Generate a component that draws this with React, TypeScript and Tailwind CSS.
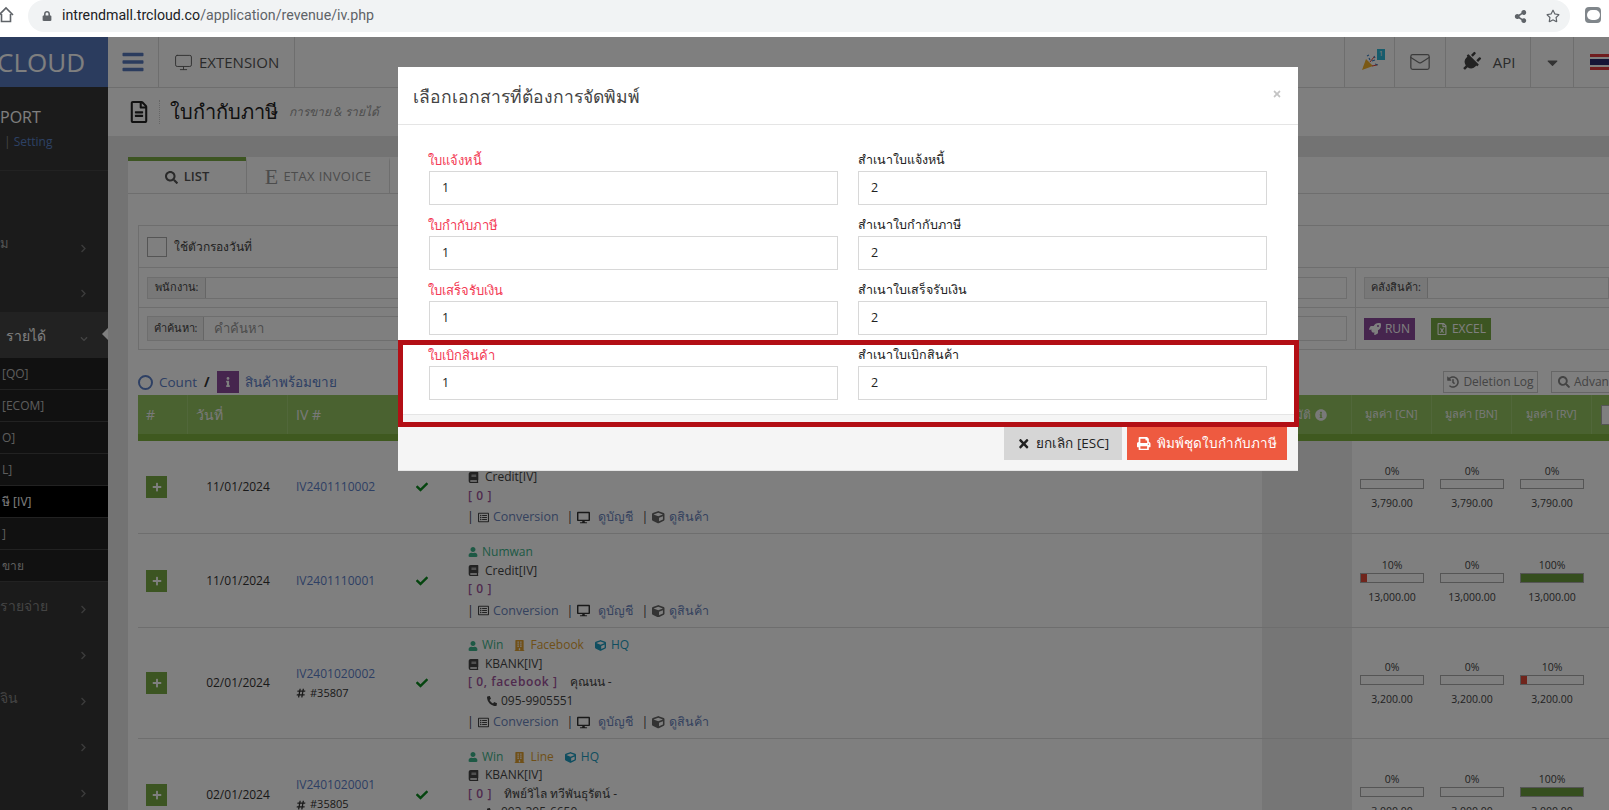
import React from 'react';
import { Mail, Monitor } from 'lucide-react';
import {
  FaBars, FaBook, FaBuilding, FaCaretDown, FaCheck, FaChevronDown, FaChevronRight, FaCube, FaDesktop, FaHashtag,
  FaHistory, FaInfo, FaInfoCircle, FaPhone, FaPlug, FaPlus, FaPrint, FaRegFileAlt, FaRegFileExcel,
  FaRegListAlt, FaRegStar, FaRocket, FaSearch, FaShareAlt, FaTimes, FaUser, FaLock,
} from 'react-icons/fa';

const copies = [
  ['ใบแจ้งหนี้', 'สำเนาใบแจ้งหนี้'],
  ['ใบกำกับภาษี', 'สำเนาใบกำกับภาษี'],
  ['ใบเสร็จรับเงิน', 'สำเนาใบเสร็จรับเงิน'],
  ['ใบเบิกสินค้า', 'สำเนาใบเบิกสินค้า'],
];

const menuTop = [
  { label: 'ม', h: 'h-[46px]' },
  { label: '', h: 'h-[45px]' },
];
const subMenu = ['[QO]', '[ECOM]', 'O]', 'L]', 'ษี [IV]', ']', 'ขาย'];
const menuBottom = ['รายจ่าย', '', 'จิน', '', ''];

type Bar = { pct: number; value: string };
type Row = {
  h: string;
  date: string;
  iv: string;
  ref?: string;
  user: string;
  channel?: string;
  branch?: string;
  pay: string;
  tag: string;
  customer?: string;
  phone?: string;
  bars: Bar[];
};

const rows: Row[] = [
  { h: 'h-[93px]', date: '11/01/2024', iv: 'IV2401110002', user: 'Numwan', pay: 'Credit[IV]', tag: '[ 0 ]', bars: [{ pct: 0, value: '3,790.00' }, { pct: 0, value: '3,790.00' }, { pct: 0, value: '3,790.00' }] },
  { h: 'h-[94px]', date: '11/01/2024', iv: 'IV2401110001', user: 'Numwan', pay: 'Credit[IV]', tag: '[ 0 ]', bars: [{ pct: 10, value: '13,000.00' }, { pct: 0, value: '13,000.00' }, { pct: 100, value: '13,000.00' }] },
  { h: 'h-[111px]', date: '02/01/2024', iv: 'IV2401020002', ref: '#35807', user: 'Win', channel: 'Facebook', branch: 'HQ', pay: 'KBANK[IV]', tag: '[ 0, facebook ]', customer: 'คุณนน -', phone: '095-9905551', bars: [{ pct: 0, value: '3,200.00' }, { pct: 0, value: '3,200.00' }, { pct: 10, value: '3,200.00' }] },
  { h: 'h-[112px]', date: '02/01/2024', iv: 'IV2401020001', ref: '#35805', user: 'Win', channel: 'Line', branch: 'HQ', pay: 'KBANK[IV]', tag: '[ 0 ]', customer: 'ทิพย์วิไล ทวีพันธุรัตน์ -', phone: '093-395-6650', bars: [{ pct: 0, value: '3,000.00' }, { pct: 0, value: '3,000.00' }, { pct: 100, value: '3,000.00' }] },
];

const tableCols = 'grid grid-cols-[50px_100px_100px_68px_806px_90px_80px_80px_80px_1fr]';

const ProgressCell: React.FC<{ bar: Bar }> = ({ bar }) => (
  <div className="flex flex-col items-center justify-center text-[10.5px] text-[#444]">
    <div className="h-[14px] leading-[14px]">{bar.pct}%</div>
    <div className="mt-[1px] h-[10px] w-[64px] border border-[#aaa] bg-white">
      {bar.pct === 100 && <div className="h-full w-full bg-[#6a9c3c]" />}
      {bar.pct === 10 && <div className="h-full w-[6px] bg-[#e04a38]" />}
    </div>
    <div className="mt-[7px] h-[14px] leading-[14px]">{bar.value}</div>
  </div>
);

const TableRow: React.FC<{ row: Row }> = ({ row }) => (
  <div className={`${tableCols} ${row.h} shrink-0 border-b border-[#ddd] bg-white`}>
    <div className="flex items-center pl-2">
      <div className="flex h-[22px] w-[21px] items-center justify-center bg-[#79aa45] text-[10px] text-white"><FaPlus /></div>
    </div>
    <div className="flex items-center justify-center text-[12px] font-medium text-[#333]">{row.date}</div>
    <div className="flex flex-col justify-center pl-2 text-[12px] text-[#5c80c8]">
      <div>{row.iv}</div>
      {row.ref && (
        <div className="mt-[2px] flex items-center gap-1 text-[11px] text-[#333]"><FaHashtag className="text-[10px]" />{row.ref}</div>
      )}
    </div>
    <div className="flex items-center justify-center text-[12px] text-[#0a8a1e]"><FaCheck /></div>
    <div className="flex flex-col justify-center pl-3 pt-[2px] text-[12px] leading-[18.5px] text-[#444]">
      <div className="flex items-center gap-[6px]">
        <span className="flex items-center gap-1 text-[#3cb38a]"><FaUser className="text-[10px]" />{row.user}</span>
        {row.channel && <span className="ml-[5px] flex items-center gap-[5px] text-[#e0a030]"><FaBuilding className="text-[11px]" />{row.channel}</span>}
        {row.branch && <span className="ml-[5px] flex items-center gap-[5px] text-[#1e9cc0]"><FaCube className="text-[11px]" />{row.branch}</span>}
      </div>
      <div className="flex items-center gap-[6px]"><FaBook className="text-[11px]" />{row.pay}</div>
      <div className="flex items-center gap-3">
        <span className="font-semibold tracking-[0.6px] text-[#a0559c]">{row.tag}</span>
        {row.customer && <span>{row.customer}</span>}
      </div>
      {row.phone && <div className="flex items-center gap-1 pl-[19px]"><FaPhone className="-scale-x-100 text-[10px]" />{row.phone}</div>}
      <div className="mt-[3px] flex items-center gap-[4px] text-[12.5px] text-[#6a84bc]">
        <span className="-ml-px text-[#444]">|</span><FaRegListAlt className="text-[11px] text-[#444]" />Conversion
        <span className="ml-[4px] text-[#444]">|</span><FaDesktop className="text-[13px] text-[#333]" /><span className="ml-[4px]">ดูบัญชี</span>
        <span className="ml-[4px] text-[#444]">|</span><FaCube className="text-[#666]" />ดูสินค้า
      </div>
    </div>
    <div className="bg-[#ececec]" />
    {row.bars.map((bar, i) => <ProgressCell key={i} bar={bar} />)}
    <div />
  </div>
);

const Sidebar: React.FC = () => (
  <aside className="flex w-[108px] shrink-0 flex-col overflow-hidden bg-[#363636] text-[#aaa]">
    <div className="flex h-[50px] shrink-0 items-center justify-end bg-[#5779bd] pr-[23px] text-[26px] text-white">CLOUD</div>
    <div className="h-[84px] shrink-0 border-b border-[#444]">
      <div className="mt-[18px] text-[16px] leading-[24px] text-white">PORT</div>
      <div className="mt-[4px] pl-[4px] text-[12px] text-[#5b83c8]"><span className="text-[#888]">|</span> Setting</div>
    </div>
    <div className="h-[50px] shrink-0" />
    {menuTop.map((m, i) => (
      <div key={i} className={`flex ${m.h} shrink-0 items-center justify-between pr-5 text-[13px]`}>
        <span>{m.label}</span><FaChevronRight className="mt-2 text-[9px] text-[#777]" />
      </div>
    ))}
    <div className="relative flex h-[46px] shrink-0 items-center justify-between bg-[#444] pl-[6px] pr-5 text-[14px] text-white">
      <span>รายได้</span><FaChevronDown className="mt-2 text-[8px] text-[#888]" />
      <div className="absolute right-0 top-[16px] h-0 w-0 border-y-[6px] border-r-[6px] border-y-transparent border-r-white" />
    </div>
    {subMenu.map((s, i) => (
      <div key={i} className={`flex h-[32px] shrink-0 items-center border-b border-[#444] pl-[2px] text-[12px] ${i === 4 ? 'bg-black text-white' : 'bg-[#222] text-[#bbb]'}`}>{s}</div>
    ))}
    {menuBottom.map((s, i) => (
      <div key={i} className="flex h-[46px] shrink-0 items-center justify-between pr-5 text-[14px] text-[#888]">
        <span>{s}</span><FaChevronRight className="mt-2 text-[9px] text-[#777]" />
      </div>
    ))}
  </aside>
);

const TopBar: React.FC = () => (
  <div className="flex h-[51px] shrink-0 items-stretch justify-between border-b border-[#ddd] bg-white text-[#555]">
    <div className="flex">
      <div className="flex w-[51px] items-center justify-center border-r border-[#ddd] text-[24px] text-[#5779bd]"><FaBars /></div>
      <div className="flex items-center gap-[6px] border-r border-[#ddd] px-[15px] text-[15px]"><Monitor size={19} strokeWidth={1.25} className="text-[#666]" />EXTENSION</div>
    </div>
    <div className="flex">
      <div className="relative flex w-[50px] items-center justify-center border-l border-[#ddd]">
        <svg width="18" height="18" viewBox="0 0 18 18">
          <path d="M1 17 L5 6 L12 13 Z" fill="#f5b32a" />
          <path d="M8 5 l1 2 M13 3 l1 2 M11 8 l3 -1 M14 11 l3 1 M6 3 l2 -1" stroke="#3b82c4" strokeWidth="1.2" />
          <path d="M9 9 l4 -5 M11 13 l5 -1" stroke="#e0453a" strokeWidth="1" />
        </svg>
        <div className="absolute right-[9px] top-[12px] flex h-[11px] w-[8px] items-center justify-center bg-[#2fb8d8] text-[7px] text-white">1</div>
      </div>
      <div className="flex w-[51px] items-center justify-center border-l border-[#ddd] text-[#777]"><Mail size={22} strokeWidth={1.4} /></div>
      <div className="flex w-[85px] items-center justify-center gap-3 border-l border-[#ddd] text-[15px]"><FaPlug className="rotate-45 text-[20px] text-[#444]" />API</div>
      <div className="flex w-[43px] items-center justify-center border-l border-[#ddd] text-[17px] text-[#666]"><FaCaretDown /></div>
      <div className="flex w-[36px] items-center border-l border-[#ddd] pl-4">
        <div className="flex h-[16px] w-[20px] shrink-0 flex-col">
          <div className="h-[3px] bg-[#e03a3e]" /><div className="h-[2px] bg-white" /><div className="h-[6px] bg-[#2d2a6e]" /><div className="h-[2px] bg-white" /><div className="h-[3px] bg-[#e03a3e]" />
        </div>
      </div>
    </div>
  </div>
);

const FieldGroup: React.FC<{ label: string; w: string; placeholder?: string; h: string }> = ({ label, w, placeholder, h }) => (
  <div className={`flex ${h} flex-1 border border-[#ddd]`}>
    <div className={`flex ${w} shrink-0 items-center justify-center border-r border-[#ccc] bg-[#f0f0f0] text-[11px] text-[#444]`}>{label}</div>
    {placeholder && <div className="flex items-center pl-[10px] text-[13px] text-[#999]">{placeholder}</div>}
  </div>
);

const Content: React.FC = () => (
  <div className="flex min-w-0 flex-1 flex-col bg-[#e6e6e6]">
    <TopBar />
    <div className="flex h-[48px] shrink-0 items-center bg-white pl-[20px]">
      <FaRegFileAlt className="text-[22px] text-[#222]" />
      <div className="ml-[9px] h-[24px] border-l border-dotted border-[#ccc]" />
      <div className="ml-[10px] text-[20px] text-[#222]">ใบกำกับภาษี</div>
      <div className="ml-[11px] text-[12px] italic text-[#999]">การขาย &amp; รายได้</div>
    </div>
    <div className="ml-[20px] mt-[21px] flex min-h-0 flex-1 flex-col bg-white">
      <div className="flex h-[37px] shrink-0 border-b border-[#ddd] bg-white">
        <div className="flex w-[118px] items-center justify-center gap-[6px] border-t-4 border-[#7bab45] bg-white text-[13px] font-semibold text-[#555]"><FaSearch />LIST</div>
        <div className="flex w-[144px] items-center justify-center gap-[5px] border-x border-t-4 border-x-[#ddd] border-t-transparent text-[13px] tracking-wide text-[#999]"><span className="font-['Liberation_Serif',serif] text-[22px] leading-none">E</span>ETAX INVOICE</div>
      </div>
      <div className="ml-[10px] mt-[31px] shrink-0 border border-r-0 border-[#ddd]">
        <div className="flex h-[42px] items-center border-b border-[#ddd] pl-[8px] text-[12px] text-[#444]">
          <div className="h-5 w-5 border border-[#aaa] bg-white" /><span className="ml-[7px]">ใช้ตัวกรองวันที่</span>
        </div>
        <div className="flex h-[40px] items-center border-b border-[#ddd]">
          <div className="flex w-[1217px] items-center self-stretch border-r border-[#ddd] px-[8px]"><FieldGroup label="พนักงาน:" w="w-[58px]" h="h-[22px]" /></div>
          <div className="flex flex-1 items-center pl-[8px]"><FieldGroup label="คลังสินค้า:" w="w-[63px]" h="h-[22px]" /></div>
        </div>
        <div className="flex h-[41px] items-center">
          <div className="flex w-[1217px] items-center self-stretch border-r border-[#ddd] px-[8px]"><FieldGroup label="คำค้นหา:" w="w-[56px]" h="h-[25px]" placeholder="คำค้นหา" /></div>
          <div className="flex items-center gap-4 pl-[8px] text-[12px] text-white">
            <div className="flex h-[22px] w-[51px] items-center justify-center gap-1 bg-[#8c4a9c]"><FaRocket />RUN</div>
            <div className="flex h-[22px] w-[60px] items-center justify-center gap-1 bg-[#79aa45]"><FaRegFileExcel />EXCEL</div>
          </div>
        </div>
      </div>
      <div className="ml-[10px] mt-[21px] flex h-[22px] shrink-0 items-center text-[13.5px] text-[#5c80c8]">
        <div className="h-[15px] w-[15px] rounded-full border-2 border-[#5c80c8]" />
        <span className="ml-[6px]">Count</span>
        <span className="ml-[7px] font-bold text-[#333]">/</span>
        <div className="ml-[7px] flex h-[22px] w-[22px] items-center justify-center bg-[#8c4a9c] text-[10px] text-white"><FaInfo /></div>
        <span className="ml-[6px]">สินค้าพร้อมขาย</span>
        <div className="ml-auto flex items-center gap-[13px] text-[12px] text-[#888]">
          <div className="flex h-[22px] w-[95px] items-center justify-center gap-1 border border-[#ccc]"><FaHistory />Deletion Log</div>
          <div className="flex h-[22px] w-[58px] items-center gap-1 overflow-hidden whitespace-nowrap border border-r-0 border-[#ccc] pl-[6px]"><FaSearch className="shrink-0" />Advanced</div>
        </div>
      </div>
      <div className="ml-[10px] mt-[2px] flex min-h-0 flex-1 flex-col overflow-hidden">
        <div className={`${tableCols} h-[46px] shrink-0 border-b-[7px] border-[#7eb33f] bg-[#94c561] text-[12px] text-[#f2f2f2]`}>
          <div className="flex items-center border-r border-[#a3cf75] pl-2 text-[14px]">#</div>
          <div className="flex items-center border-r border-[#a3cf75] pl-2 text-[14px]">วันที่</div>
          <div className="flex items-center pl-2 text-[14px]">IV #</div>
          <div />
          <div />
          <div className="flex items-center justify-end gap-1 border-r border-[#a3cf75] pr-[24px] text-[12px]">อนุมัติ <FaInfoCircle /></div>
          <div className="flex items-center justify-center border-r border-[#a3cf75] text-[11px]">มูลค่า [CN]</div>
          <div className="flex items-center justify-center border-r border-[#a3cf75] text-[11px]">มูลค่า [BN]</div>
          <div className="flex items-center justify-center border-r border-[#a3cf75] text-[11px]">มูลค่า [RV]</div>
          <div className="flex items-center pl-[9px]"><div className="h-5 w-5 border border-[#aaa] bg-white" /></div>
        </div>
        {rows.map((row) => <TableRow key={row.iv} row={row} />)}
      </div>
    </div>
  </div>
);

const PrintModal: React.FC = () => (
  <div className="absolute left-[398px] top-[30px] h-[404px] w-[900px] bg-white text-[#333]">
    <div className="flex h-[58px] items-center justify-between border-b border-[#e5e5e5] pl-[15px] pr-[16px]">
      <div className="mt-[2px] text-[17.5px] text-[#444]">เลือกเอกสารที่ต้องการจัดพิมพ์</div>
      <FaTimes className="mb-1 text-[10px] text-[#c4c4c4]" />
    </div>
    <div className="h-[290px] border-b border-[#e5e5e5] px-[31px] pt-[23px]">
      <div className="grid grid-cols-2 gap-x-5 gap-y-[2px]">
        {copies.flat().map((label, i) => (
          <div key={label} className="h-[63px]">
            <div className={`h-[23px] leading-[24px] ${i % 2 === 0 ? '-ml-px text-[13px] text-[#f33b55]' : 'text-[12.5px] font-medium text-[#222]'}`}>{label}</div>
            <div className="flex h-[34px] items-center border border-[#d8d8d8] pl-[12px] text-[12.5px] text-[#222]">{i % 2 === 0 ? '1' : '2'}</div>
          </div>
        ))}
      </div>
    </div>
    <div className="flex h-[56px] items-start justify-end gap-[5px] border-b border-[#e5e5e5] bg-[#f5f5f5] pr-[11px] pt-[12px] text-[13.5px]">
      <div className="flex h-[33px] w-[118px] items-center justify-center gap-[6px] bg-[#d6d6d6] text-[#222]"><FaTimes />ยกเลิก [ESC]</div>
      <div className="flex h-[33px] w-[160px] items-center justify-center gap-[6px] bg-[#ee5a40] text-white"><FaPrint />พิมพ์ชุดใบกำกับภาษี</div>
    </div>
    <div className="absolute -right-px left-0 top-[273px] h-[87px] border-[5px] border-[#b30f15]" />
  </div>
);

const App: React.FC = () => {
  return (
    <div className="flex h-screen flex-col overflow-hidden bg-white font-['Open_Sans','Noto_Sans',sans-serif]">
      <div className="flex h-[37px] shrink-0 items-start">
        <svg width="18" height="18" viewBox="0 0 18 18" className="ml-[-2px] mt-[6px] shrink-0" fill="none" stroke="#5f6368" strokeWidth="1.6">
          <path d="M1 9 L8 2 L15 9 M3.5 8 V15.5 H12.5 V8" />
        </svg>
        <div className="ml-[12px] flex h-[32px] flex-1 items-center rounded-2xl bg-[#f1f3f4] pl-[14px] font-['Roboto',sans-serif] text-[14.2px] text-[#5f6368]">
          <FaLock className="text-[10px]" />
          <span className="ml-[10px] text-[#202124]">intrendmall.trcloud.co</span>/application/revenue/iv.php
          <FaShareAlt className="ml-auto text-[13px]" />
          <FaRegStar className="ml-[19px] mr-[10px] text-[14px]" />
        </div>
        <div className="ml-[15px] mr-[8px] mt-[7px] flex h-4 w-4 shrink-0 items-center justify-center rounded-sm bg-[#80868b]">
          <div className="h-[10px] w-[13px] rounded-full bg-white" />
        </div>
      </div>
      <div className="relative flex min-h-0 flex-1">
        <Sidebar />
        <Content />
        <div className="absolute inset-0 bg-black/50" />
        <PrintModal />
      </div>
    </div>
  );
};

export default App;
